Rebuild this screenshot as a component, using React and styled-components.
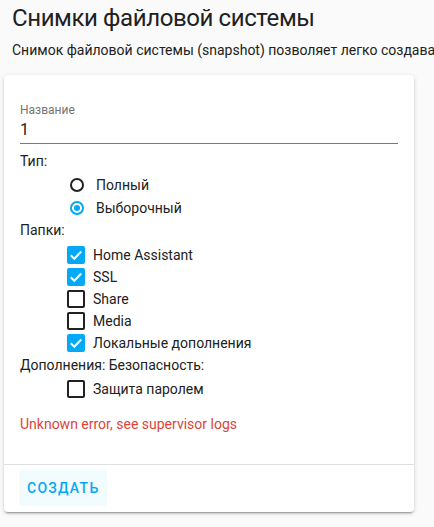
import React from "react";
import styled, { createGlobalStyle } from "styled-components";

const Global = createGlobalStyle`
  html, body { margin: 0; padding: 0; overflow: hidden; }
  body {
    background: #fafafa;
    font-family: Roboto, "Noto Sans", sans-serif;
    color: #212121;
    -webkit-font-smoothing: antialiased;
  }
`;

const Page = styled.div`
  width: 434px;
  height: 527px;
  overflow: hidden;
`;

const Header = styled.header`
  padding: 2px 12px 0;
`;

const Title = styled.h1`
  margin: 0;
  font-size: 24px;
  line-height: 32px;
  font-weight: 400;
  letter-spacing: -0.4px;
  color: #212121;
`;

const Description = styled.p`
  margin: 6px 0 0;
  font-size: 14px;
  line-height: 20px;
  white-space: nowrap;
  color: #212121;
`;

const Card = styled.section`
  margin: 15px 0 0 4px;
  width: 410px;
  background: #fff;
  border-radius: 4px;
  box-shadow: 0 2px 2px 0 rgba(0, 0, 0, 0.14), 0 1px 5px 0 rgba(0, 0, 0, 0.12),
    0 3px 1px -2px rgba(0, 0, 0, 0.2);
`;

const CardContent = styled.div`
  padding: 27px 16px 30px;
`;

const Field = styled.div`
  display: flex;
  flex-direction: column;
`;

const FieldLabel = styled.label`
  font-size: 12px;
  line-height: 16px;
  color: #737373;
`;

const FieldValue = styled.div`
  font-size: 16px;
  line-height: 24px;
  color: #212121;
  border-bottom: 1px solid #7a7a7a;
  padding-bottom: 1px;
`;

const GroupLabel = styled.div`
  font-size: 14px;
  line-height: 23px;
  margin-top: ${(p) => p.$mt || 0}px;
`;

const Options = styled.div`
  display: flex;
  flex-direction: column;
  padding-left: 47px;
  margin-top: ${(p) => p.$mt || 0}px;
`;

const Option = styled.div`
  display: flex;
  align-items: center;
  height: ${(p) => p.$h || 22}px;
  font-size: 14px;
  color: #212121;
`;

const Radio = styled.span`
  box-sizing: border-box;
  width: 14px;
  height: 14px;
  margin-left: 3px;
  margin-right: 12px;
  border-radius: 50%;
  border: 2px solid ${(p) => (p.$checked ? "#03a9f4" : "#212121")};
  display: flex;
  align-items: center;
  justify-content: center;
  &::after {
    content: "";
    display: ${(p) => (p.$checked ? "block" : "none")};
    width: 6px;
    height: 6px;
    border-radius: 50%;
    background: #03a9f4;
  }
`;

const Box = styled.span`
  box-sizing: border-box;
  width: 18px;
  height: 18px;
  margin-right: 8px;
  border-radius: 2px;
  border: 2px solid ${(p) => (p.$checked ? "#03a9f4" : "#212121")};
  background: ${(p) => (p.$checked ? "#03a9f4" : "transparent")};
  display: flex;
  align-items: center;
  justify-content: center;
`;

const ErrorText = styled.div`
  margin-top: 14px;
  font-size: 14px;
  line-height: 20px;
  color: #db4437;
`;

const Actions = styled.div`
  border-top: 1px solid #e0e0e0;
  padding: 5px 16px 6px 15px;
  display: flex;
`;

const Button = styled.button`
  height: 36px;
  min-width: 80px;
  padding: 0 8px;
  border: none;
  border-radius: 4px;
  background: rgba(3, 169, 244, 0.05);
  color: #03a9f4;
  font-family: Roboto, sans-serif;
  font-size: 14px;
  font-weight: 500;
  letter-spacing: 1.25px;
  text-transform: uppercase;
  cursor: pointer;
`;

const Check = () => (
  <svg width="14" height="14" viewBox="0 0 24 24">
    <path d="M3 12.5l6 6L21 6" fill="none" stroke="#fff" strokeWidth="3.4" />
  </svg>
);

const CheckRow = ({ checked, children, h }) => (
  <Option $h={h}>
    <Box $checked={checked}>{checked && <Check />}</Box>
    {children}
  </Option>
);

const RadioRow = ({ checked, children }) => (
  <Option $h={23}>
    <Radio $checked={checked} />
    {children}
  </Option>
);

export default function App() {
  return (
    <Page>
      <Global />
      <Header>
        <Title>Снимки файловой системы</Title>
        <Description>
          Снимок файловой системы (snapshot) позволяет легко создавать резервную
          копию и восстанавливать все данные вашего Home Assistant.
        </Description>
      </Header>
      <Card>
        <CardContent>
          <Field>
            <FieldLabel>Название</FieldLabel>
            <FieldValue>1</FieldValue>
          </Field>
          <GroupLabel $mt={6}>Тип:</GroupLabel>
          <Options>
            <RadioRow>Полный</RadioRow>
            <RadioRow checked>Выборочный</RadioRow>
          </Options>
          <GroupLabel>Папки:</GroupLabel>
          <Options $mt={2}>
            <CheckRow checked>Home Assistant</CheckRow>
            <CheckRow checked>SSL</CheckRow>
            <CheckRow>Share</CheckRow>
            <CheckRow>Media</CheckRow>
            <CheckRow checked>Локальные дополнения</CheckRow>
          </Options>
          <GroupLabel>Дополнения: Безопасность:</GroupLabel>
          <Options>
            <CheckRow h={23}>Защита паролем</CheckRow>
          </Options>
          <ErrorText>Unknown error, see supervisor logs</ErrorText>
        </CardContent>
        <Actions>
          <Button>Создать</Button>
        </Actions>
      </Card>
    </Page>
  );
}
